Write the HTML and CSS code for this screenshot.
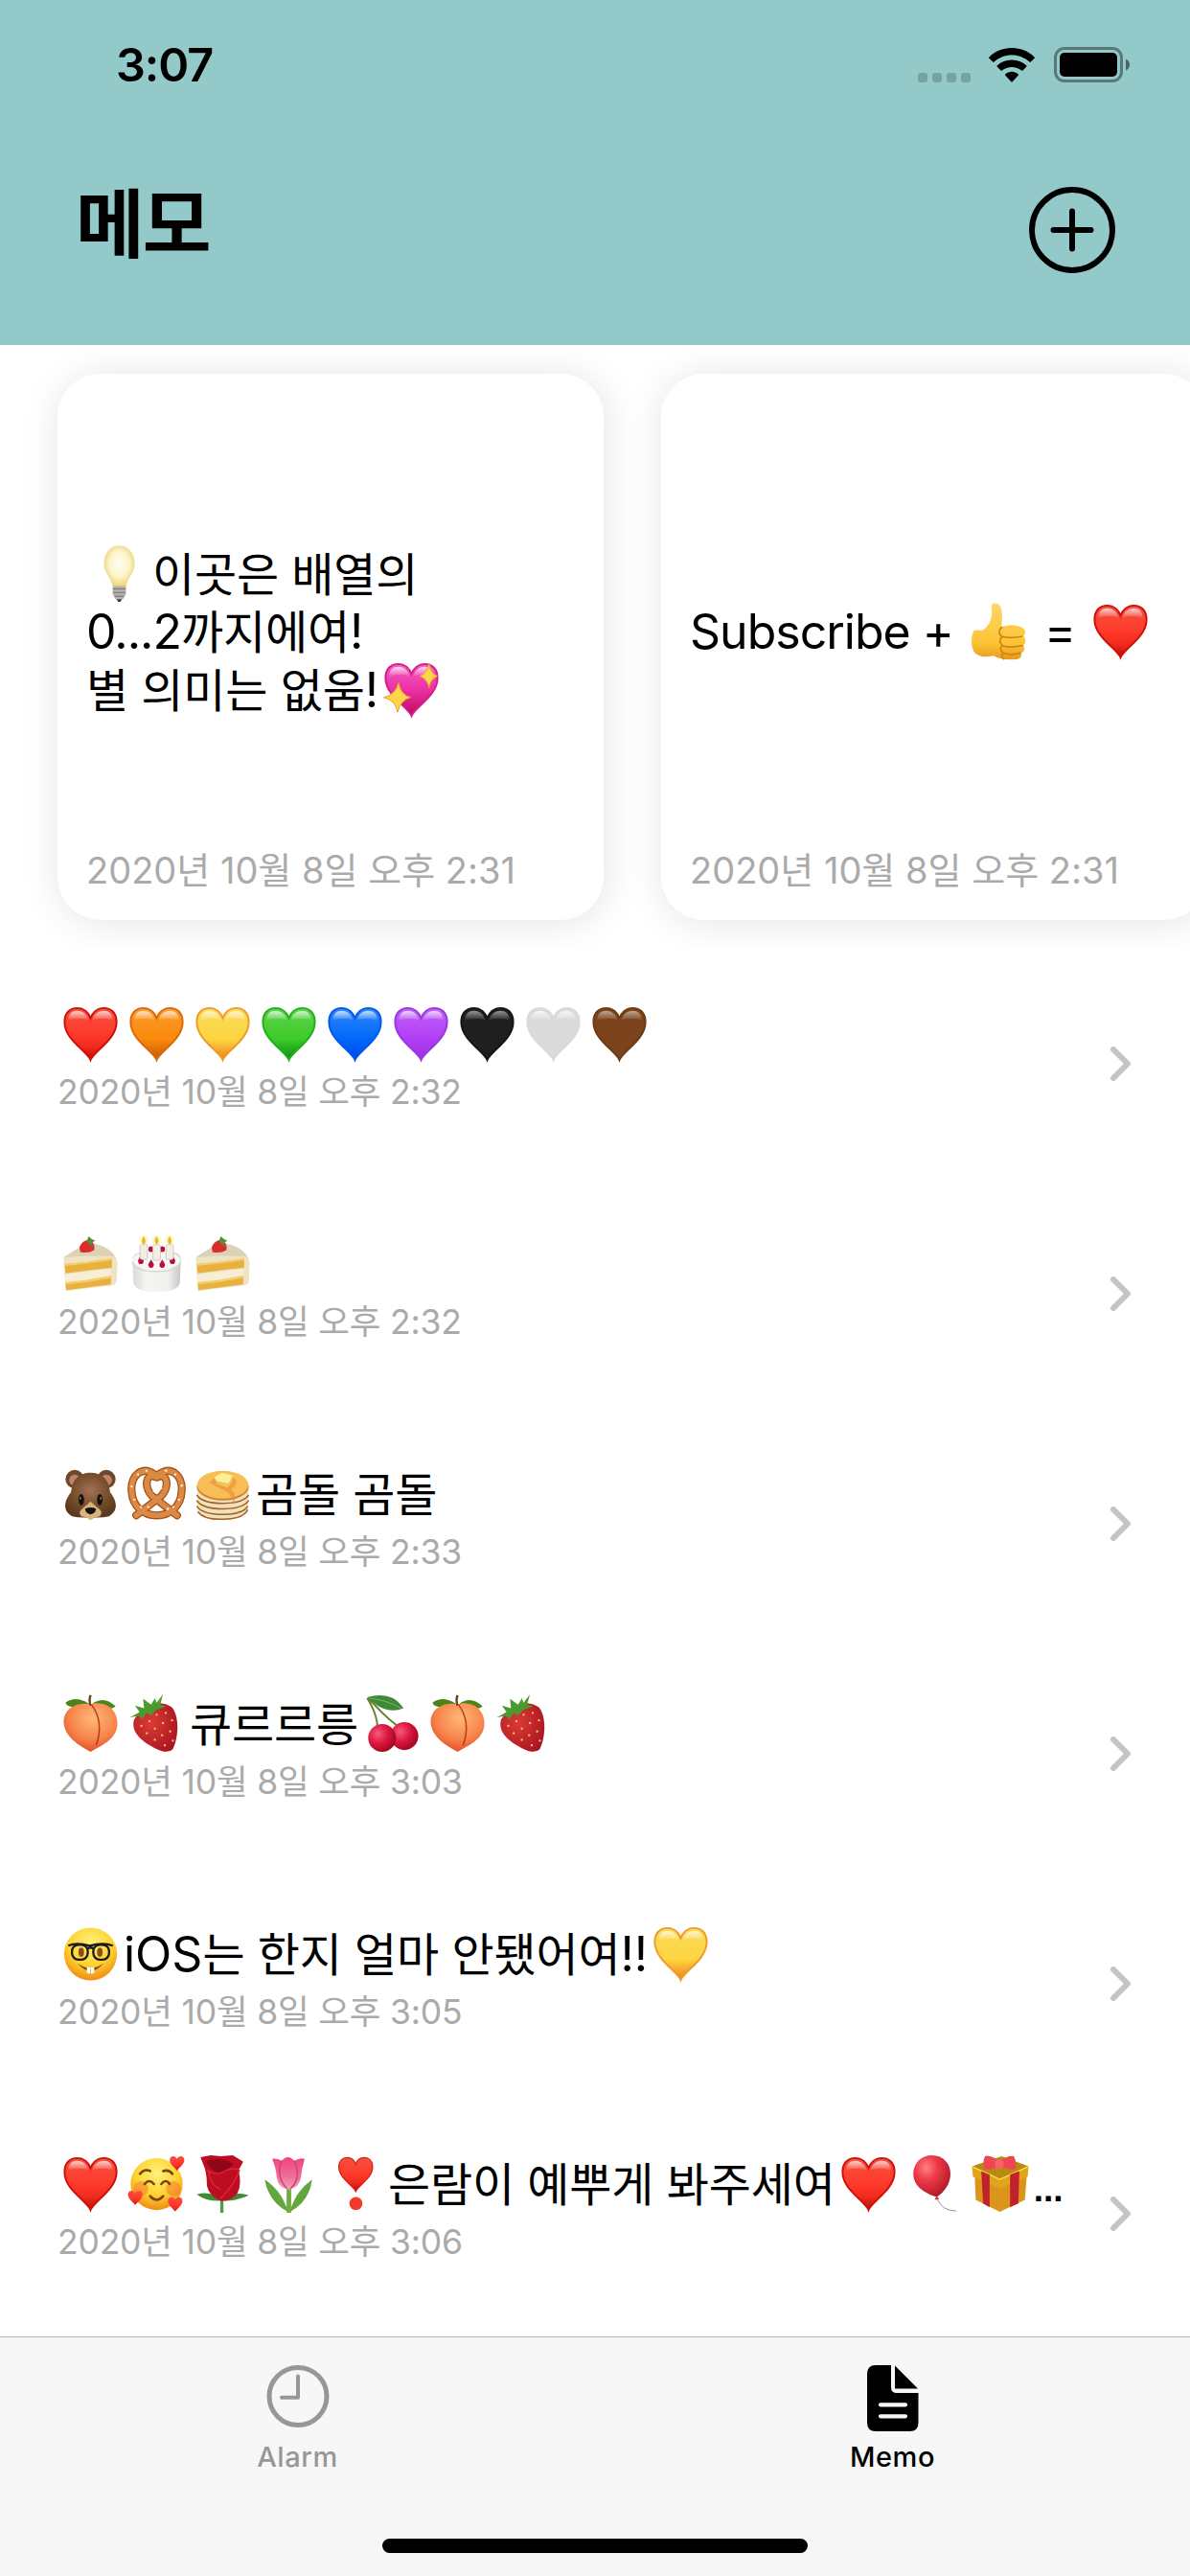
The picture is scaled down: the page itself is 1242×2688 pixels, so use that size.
FILE: index.html
```html
<!DOCTYPE html>
<html lang="ko">
<head>
<meta charset="utf-8">
<title>메모</title>
<link rel="stylesheet" href="styles.css">
</head>
<body>
<svg width="0" height="0" class="defs" aria-hidden="true">
  <defs>
    <linearGradient id="shine" x1="0" y1="0" x2="0" y2="1"><stop offset="0" stop-color="#fff" stop-opacity=".75"/><stop offset="1" stop-color="#fff" stop-opacity="0"/></linearGradient>
    <linearGradient id="g-red" x1="0" y1="0" x2="0" y2="1"><stop offset="0" stop-color="#f5503f"/><stop offset=".5" stop-color="#ff3a2b"/><stop offset=".75" stop-color="#f02a1c"/><stop offset="1" stop-color="#b30d05"/></linearGradient>
    <linearGradient id="g-orange" x1="0" y1="0" x2="0" y2="1"><stop offset="0" stop-color="#fb9a2b"/><stop offset=".6" stop-color="#fb8a0c"/><stop offset="1" stop-color="#c65405"/></linearGradient>
    <linearGradient id="g-yellow" x1="0" y1="0" x2="0" y2="1"><stop offset="0" stop-color="#fbd95a"/><stop offset=".6" stop-color="#fcd640"/><stop offset="1" stop-color="#ef7d1e"/></linearGradient>
    <linearGradient id="g-green" x1="0" y1="0" x2="0" y2="1"><stop offset="0" stop-color="#5fd24d"/><stop offset=".6" stop-color="#3ecb29"/><stop offset="1" stop-color="#0b8a13"/></linearGradient>
    <linearGradient id="g-blue" x1="0" y1="0" x2="0" y2="1"><stop offset="0" stop-color="#2f87fb"/><stop offset=".6" stop-color="#0068f8"/><stop offset="1" stop-color="#0045ea"/></linearGradient>
    <linearGradient id="g-purple" x1="0" y1="0" x2="0" y2="1"><stop offset="0" stop-color="#bf60f8"/><stop offset=".6" stop-color="#b23df6"/><stop offset="1" stop-color="#9a2fe0"/></linearGradient>
    <linearGradient id="g-pink" x1="0" y1="0" x2="0" y2="1"><stop offset="0" stop-color="#f25fc0"/><stop offset=".5" stop-color="#ec2fa5"/><stop offset="1" stop-color="#b80d5c"/></linearGradient>
    <radialGradient id="g-face" cx=".5" cy=".3" r=".7"><stop offset="0" stop-color="#fff27a"/><stop offset=".6" stop-color="#fdd22f"/><stop offset="1" stop-color="#f08a12"/></radialGradient>
    <radialGradient id="g-bulb" cx=".5" cy=".45" r=".55"><stop offset="0" stop-color="#fffef8"/><stop offset=".6" stop-color="#fdf4c8"/><stop offset="1" stop-color="#eed678"/></radialGradient>
    <radialGradient id="g-berry" cx=".4" cy=".4" r=".7"><stop offset="0" stop-color="#dc3b35"/><stop offset="1" stop-color="#a81420"/></radialGradient>
    <radialGradient id="g-cherry" cx=".35" cy=".35" r=".7"><stop offset="0" stop-color="#f45a7c"/><stop offset=".5" stop-color="#de1840"/><stop offset="1" stop-color="#9f0522"/></radialGradient>
    <radialGradient id="g-peach" cx=".55" cy=".3" r=".75"><stop offset="0" stop-color="#ffb877"/><stop offset=".6" stop-color="#f7834a"/><stop offset="1" stop-color="#de4526"/></radialGradient>
    <radialGradient id="g-balloon" cx=".35" cy=".3" r=".75"><stop offset="0" stop-color="#fb8484"/><stop offset=".4" stop-color="#ef3a48"/><stop offset="1" stop-color="#ae1728"/></radialGradient>
    <radialGradient id="g-bear" cx=".5" cy=".4" r=".6"><stop offset="0" stop-color="#a2705a"/><stop offset=".5" stop-color="#7d532f"/><stop offset="1" stop-color="#5a3a1c"/></radialGradient>
    <linearGradient id="g-white" x1="0" y1="0" x2="1" y2="0"><stop offset="0" stop-color="#d8d8d6"/><stop offset=".3" stop-color="#f6f6f5"/><stop offset=".75" stop-color="#f0f0ef"/><stop offset="1" stop-color="#c4c4c3"/></linearGradient>
    <linearGradient id="g-thumb" x1="0" y1="0" x2="0" y2="1"><stop offset="0" stop-color="#ffd765"/><stop offset=".7" stop-color="#fcc436"/><stop offset="1" stop-color="#e89a1c"/></linearGradient>
    <linearGradient id="g-tulip" x1="0" y1="0" x2="0" y2="1"><stop offset="0" stop-color="#f0427c"/><stop offset=".6" stop-color="#ee6f9c"/><stop offset="1" stop-color="#f3a3b4"/></linearGradient>
    <path id="heart-shape" d="M32 60C28 50 4 38 4 19C4 9 10 4 17.500 4C25 4 30 9 32 15C34 9 39 4 46.500 4C54 4 60 9 60 19C60 38 36 50 32 60Z"/>
    <path id="heart-shine" d="M8 18C8 10 12 7 18 7C24 7 28 11 30 17C22 15 13 15 8 18ZM56 18C56 10 52 7 46 7C40 7 36 11 34 17C42 15 51 15 56 18Z" fill="url(#shine)"/>

    <symbol id="red" viewBox="0 0 64 64"><use href="#heart-shape" fill="url(#g-red)" stroke="#cf1009" stroke-width="2"/><use href="#heart-shine"/></symbol>
    <symbol id="orange" viewBox="0 0 64 64"><use href="#heart-shape" fill="url(#g-orange)" stroke="#d96a0a" stroke-width="2"/><use href="#heart-shine"/></symbol>
    <symbol id="yellow" viewBox="0 0 64 64"><use href="#heart-shape" fill="url(#g-yellow)" stroke="#f29a26" stroke-width="2"/><use href="#heart-shine"/></symbol>
    <symbol id="green" viewBox="0 0 64 64"><use href="#heart-shape" fill="url(#g-green)" stroke="#1fb01c" stroke-width="2"/><use href="#heart-shine"/></symbol>
    <symbol id="blue" viewBox="0 0 64 64"><use href="#heart-shape" fill="url(#g-blue)" stroke="#0456ee" stroke-width="2"/><use href="#heart-shine"/></symbol>
    <symbol id="purple" viewBox="0 0 64 64"><use href="#heart-shape" fill="url(#g-purple)" stroke="#9a35e2" stroke-width="2"/><use href="#heart-shine"/></symbol>
    <symbol id="black" viewBox="0 0 64 64"><use href="#heart-shape" fill="#1f1f1f" stroke="#151515" stroke-width="2"/><use href="#heart-shine" opacity=".7"/></symbol>
    <symbol id="white" viewBox="0 0 64 64"><use href="#heart-shape" fill="#dadada" stroke="#dcd9da" stroke-width="2"/><use href="#heart-shine"/></symbol>
    <symbol id="brown" viewBox="0 0 64 64"><use href="#heart-shape" fill="#7b421b" stroke="#6d3a14" stroke-width="2"/><use href="#heart-shine" opacity=".7"/></symbol>

    <symbol id="sparkle" viewBox="0 0 64 64"><use href="#heart-shape" fill="url(#g-pink)" stroke="#d41c8c" stroke-width="2"/><use href="#heart-shine"/>
      <path d="M51 3Q52 14 60 17Q52 20 51 30Q49 20 41 17Q49 14 51 3ZM18 24Q20 37 31 40Q20 43 17 56Q15 43 2 40Q15 37 18 24Z" fill="#fdd548" stroke="#ec9a2a" stroke-width="1"/></symbol>

    <symbol id="bulb" viewBox="0 0 64 64"><path d="M32 2C22 2 16 10 16 21C16 32 24 35 25 45H39C40 35 48 32 48 21C48 10 42 2 32 2Z" fill="url(#g-bulb)" stroke="#ecd98a" stroke-width="1"/>
      <path d="M25 45H39V54L36 59H28L25 54Z" fill="#b5b2ac"/><path d="M25 48H39M25 52H39M27 56H37" stroke="#85827c" stroke-width="1.300"/><path d="M29 59H35L33 62H31Z" fill="#333"/></symbol>

    <symbol id="thumb" viewBox="0 0 64 64"><path d="M5 31Q10 30 14 31C21 27 26 18 24 6C23 1 30 0 33 4C37 11 35 20 35 27Q46 23 56 27C62 30 61 35 58 37C62 40 61 45 58 47C61 50 59 54 56 55C57 60 54 62 50 62Q35 63 26 58Q15 61 7 56C1 49 2 38 5 31Z" fill="url(#g-thumb)"/>
      <path d="M58 37C51 39 40 39 35 37C31 35 32 29 36 27M58 47C50 49 40 49 36 47C32 44 33 39 36 38M56 55C49 57 41 57 37 55C33 53 33 49 36 47M37 55C34 57 35 60 38 62" fill="none" stroke="#c98111" stroke-width="1.500"/></symbol>

    <symbol id="slice" viewBox="0 0 64 64"><path d="M3 25C15 16 26 11 35 10C50 13 60 20 61 31L60 51Q59 54 56 55L5 61Z" fill="#efe3c3"/><path d="M3 25C15 16 26 11 35 10C46 12 55 17 58 24Q30 22 3 25Z" fill="#ddd2b8"/>
      <path d="M4 32Q30 30 55 26V36Q30 38 5 42ZM5 52Q30 50 54 45V54L6 60Z" fill="#e7b13f"/><path d="M4 33Q30 31 55 27M5 53Q30 51 54 46" stroke="#f7ce62" stroke-width="2" fill="none"/>
      <path d="M4 43Q30 41 54 37V44Q30 49 5 51Z" fill="#f8eed6"/><path d="M20 14Q23 6 31 6Q37 9 36 17Q29 21 21 19Z" fill="#dc2b2b"/><path d="M28 7L30 2L33 5L37 7L33 9L36 14L31 11Z" fill="#4c9336"/></symbol>

    <symbol id="cake" viewBox="0 0 64 64"><path d="M6 27Q6 17 32 17Q58 17 58 27L57 52Q55 62 32 62Q9 62 7 52Z" fill="url(#g-white)"/><ellipse cx="32" cy="28" rx="26" ry="10" fill="#f7f7f6"/><path d="M6 29Q8 40 32 40Q56 40 58 29" fill="none" stroke="#d7d7d5" stroke-width="1.500"/>
      <g fill="#b80f3e"><circle cx="26" cy="16" r="3"/><circle cx="38" cy="16" r="3"/><path d="M15 22l3 6q0 4-3 4t-3-4zM26 27l3 5q0 4-3 4t-3-4zM38 27l3 5q0 4-3 4t-3-4zM49 22l3 6q0 4-3 4t-3-4z"/></g>
      <g fill="#f3efe4" stroke="#c6c0b2" stroke-width=".8"><rect x="14" y="11" width="8" height="16" rx="2"/><rect x="28" y="11" width="8" height="17" rx="2"/><rect x="42" y="11" width="8" height="16" rx="2"/></g>
      <g fill="#fff6a8" opacity=".7"><circle cx="18" cy="6" r="5"/><circle cx="32" cy="6" r="5"/><circle cx="46" cy="6" r="5"/></g><path d="M18 2Q22 8 18 11Q14 8 18 2M32 2Q36 8 32 11Q28 8 32 2M46 2Q50 8 46 11Q42 8 46 2" fill="#e8b62a"/></symbol>

    <symbol id="bear" viewBox="0 0 64 64"><g fill="#704826"><circle cx="15" cy="16" r="10"/><circle cx="49" cy="16" r="10"/></g><g fill="#bd846c"><circle cx="15" cy="17" r="6"/><circle cx="49" cy="17" r="6"/></g>
      <path d="M32 9C45 9 52 17 53 30C61 40 62 50 52 56Q43 58 32 57Q21 58 12 56C2 50 3 40 11 30C12 17 19 9 32 9Z" fill="url(#g-bear)"/><path d="M32 40Q35 43 40 47Q46 51 42 56Q38 57 36 57Q32 63 28 57Q26 57 22 56Q18 51 24 47Q29 43 32 40Z" fill="#d9b27c"/><path d="M26 48Q32 45 38 48Q37 53 32 54Q27 53 26 48Z" fill="#14100d"/><g fill="#15110e"><ellipse cx="22" cy="38" rx="3" ry="6"/><ellipse cx="42" cy="38" rx="3" ry="6"/></g><path d="M21 35v3M43 35v3" stroke="#8a8480" stroke-width="1.400"/></symbol>

    <symbol id="pretzel" viewBox="0 0 64 64"><g fill="none" stroke="#a45218" stroke-width="8.500" stroke-linecap="round"><path d="M10 55L37 34C46 24 44 8 32 14M54 55L27 34C18 24 20 8 32 14M30 11C16 1 4 12 5 29C6 46 18 55 32 55C46 55 58 46 59 29C60 12 48 1 34 11"/></g>
      <g fill="none" stroke="#da8a45" stroke-width="5.800" stroke-linecap="round"><path d="M10 55L37 34C46 24 44 8 32 14M54 55L27 34C18 24 20 8 32 14M30 11C16 1 4 12 5 29C6 46 18 55 32 55C46 55 58 46 59 29C60 12 48 1 34 11"/></g>
      <path d="M5 24h.1M8 38h.1M12 11h.1M21 7h.1M42 7h.1M52 11h.1M59 23h.1M56 38h.1M50 46h.1M15 46h.1M29 29h.1M37 26h.1M44 48h.1M23 46h.1" stroke="#fff1dc" stroke-width="2.400" stroke-linecap="round"/></symbol>

    <symbol id="pancakes" viewBox="0 0 64 64"><path d="M4 26L5 51Q12 60 33 60Q54 60 59 49L60 26Z" fill="#f3dfb8"/><path d="M4 33Q10 42 32 42Q54 42 60 33M4 39Q10 48 32 48Q54 48 60 39M4 45Q10 54 32 54Q54 54 59 45M5 51Q12 60 33 59Q54 59 59 49" fill="none" stroke="#9b642c" stroke-width="1.600"/>
      <ellipse cx="32" cy="24" rx="28" ry="15" fill="#c98636"/><ellipse cx="32" cy="22" rx="27.500" ry="15" fill="#f8bd55"/><path d="M18 20Q22 11 40 13Q53 18 41 27Q47 30 44 43Q41 34 37 30Q28 25 18 20Z" fill="#e98f3e" opacity=".65"/><path d="M23 14L31 9L43 12L38 21L25 18Z" fill="#ffed98"/><path d="M25 18L38 21L43 13L42 19L37 25L25 21Z" fill="#f0c655"/></symbol>

    <symbol id="peach" viewBox="0 0 64 64"><path d="M34 10Q47 1 59 13Q54 19 36 11ZM30 10Q16 1 5 9Q8 17 28 11Z" fill="#4e8318"/><path d="M32 11C40 7 60 10 61 31C61 49 42 56 32 62C21 56 3 46 3 29C4 12 22 8 32 11Z" fill="url(#g-peach)"/><path d="M33 11Q47 30 38 55" fill="none" stroke="#bf3b1b" stroke-width="1.600"/><path d="M32 12Q30 7 32 1" fill="none" stroke="#6a4221" stroke-width="2.500"/></symbol>

    <symbol id="strawberry" viewBox="0 0 64 64"><g transform="translate(-1 0) scale(.97 1)"><path d="M9 27C20 10 38 5 51 14C60 25 58 47 52 59Q46 65 32 58C16 50 5 40 9 27Z" fill="url(#g-berry)"/><path d="M4 25L15 19L10 12L20 15L19 5L28 11L32 4L34 9L41 0L38 11L45 13L33 17L28 23L23 20L18 27L14 23Z" fill="#4c9a2f"/>
      <path d="M17 34h.1M26 29h.1M34 22h.1M44 20h.1M23 42h.1M32 37h.1M41 31h.1M51 28h.1M32 49h.1M40 44h.1M49 40h.1M43 55h.1M52 50h.1" stroke="#f2c861" stroke-width="2.400" stroke-linecap="round"/></g></symbol>

    <symbol id="cherries" viewBox="0 0 64 64"><path d="M6 4Q17 22 17 36M7 4Q28 27 40 35" fill="none" stroke="#66832a" stroke-width="2"/><path d="M6 3Q33 -4 45 15Q25 23 6 3Z" fill="#3f8a38"/><path d="M8 4Q26 6 43 15" fill="none" stroke="#78b65c" stroke-width="1"/><circle cx="46" cy="45" r="15" fill="url(#g-cherry)"/><circle cx="22" cy="47" r="15" fill="url(#g-cherry)"/></symbol>

    <symbol id="nerd" viewBox="0 0 64 64"><circle cx="32" cy="32" r="28.500" fill="url(#g-face)"/><g fill="#8a4e13"><ellipse cx="22" cy="30" rx="3" ry="5"/><ellipse cx="42" cy="30" rx="3" ry="5"/></g><g fill="none" stroke="#1c1c1f" stroke-width="2.400"><rect x="12" y="22" width="17" height="16" rx="7"/><rect x="35" y="22" width="17" height="16" rx="7"/><path d="M8 23Q17 19 31 23Q46 19 56 23M29 26Q32 24 35 26"/></g><path d="M18 42Q32 52 46 42Q32 58 18 42Z" fill="#854110"/><path d="M28 46.500H36V52Q32 54 28 52Z" fill="#fff"/><path d="M32 47V53" stroke="#bbb" stroke-width="1"/></symbol>

    <symbol id="adore" viewBox="0 0 64 64"><circle cx="32" cy="32" r="28" fill="url(#g-face)"/><g fill="#f56a35" opacity=".45"><circle cx="15" cy="37" r="8"/><circle cx="50" cy="37" r="8"/></g><g fill="none" stroke="#7c430e" stroke-width="2.600" stroke-linecap="round"><path d="M19 32Q24 26 29 32M37 32Q42 26 46 32M14 21Q19 15 25 18M39 18Q45 16 49 21M25 45Q32 53 39 45"/></g>
      <use href="#heart-shape" fill="url(#g-red)" transform="translate(45 1) scale(.28)"/><use href="#heart-shape" fill="url(#g-red)" transform="translate(0 38) scale(.28)"/><use href="#heart-shape" fill="url(#g-red)" transform="translate(43 45) scale(.28)"/></symbol>

    <symbol id="rose" viewBox="0 0 64 64"><path d="M31 45V63" stroke="#4f9b3d" stroke-width="3.500"/><path d="M31 50Q14 51 4 43Q21 39 31 50Q43 39 60 44Q46 51 31 50Z" fill="#3f8a35"/><path d="M8 3L19 1L30 2L43 1L54 8L49 17Q53 34 47 43Q39 51 30 50Q18 46 15 34Q15 24 13 16Z" fill="#be0c20"/><path d="M14 8Q28 1 43 10Q38 20 27 20Q18 16 14 8Z" fill="#8e0617"/><path d="M15 17Q25 24 34 18Q43 13 50 17Q44 34 29 48M17 18Q18 33 30 38" fill="none" stroke="#d92c38" stroke-width="1.300"/></symbol>

    <symbol id="tulip" viewBox="0 0 64 64"><path d="M32 35V63" stroke="#6fae3f" stroke-width="5"/><path d="M31 62Q25 40 6 27Q10 51 31 62ZM33 62Q39 40 57 27Q54 51 33 62Z" fill="#62a63d"/><path d="M14 5Q19 4 24 7Q31 -1 38 7Q44 3 49 5Q46 14 45 25Q43 36 32 38Q20 36 19 25Q18 14 14 5Z" fill="url(#g-tulip)"/><path d="M24 7Q18 25 30 37M38 7Q46 25 34 37" fill="none" stroke="#d43c76" stroke-width="1.500"/></symbol>

    <symbol id="exclaim" viewBox="0 0 64 64"><use href="#heart-shape" fill="url(#g-red)" stroke="#d81d12" stroke-width="2" transform="translate(12 1) scale(.65)"/><circle cx="33" cy="53" r="7" fill="#f03a2a"/></symbol>

    <symbol id="balloon" viewBox="0 0 64 64"><g transform="translate(-3 0)"><path d="M37 47Q43 61 58 61" fill="none" stroke="#8d8d8d" stroke-width="1"/><path d="M32 1C44 1 52 10 52 21C52 33 44 42 37 46Q12 38 12 21C12 9 21 1 32 1Z" fill="url(#g-balloon)"/><path d="M35 49L37 45L40 48Z" fill="#d52a38"/></g></symbol>

    <symbol id="gift" viewBox="0 0 64 64"><path d="M4 23L31 32V62L5 49ZM31 32L60 23L58 49L31 62Z" fill="#d9961a"/><path d="M1 13L33 2L62 13L31 27Z" fill="#b88a13"/><path d="M1 13L31 27V37L2 24ZM31 27L62 13L61 24L31 37Z" fill="#e0a41d"/><path d="M1 13L31 27L62 13" fill="none" stroke="#f9d83d" stroke-width="1.600"/><path d="M11 18L20 22V57L13 53ZM42 22L52 18L51 53L42 57Z" fill="#c1212c"/><path d="M31 8Q21 0 15 2Q12 8 14 16Q22 18 31 12Q42 18 48 16Q49 7 46 2Q39 1 31 8Z" fill="#ef4656"/><rect x="26" y="6" width="9" height="9" rx="3" fill="#f7616b"/></symbol>
  </defs>
</svg>

<div class="screen">
  <header class="header">
    <div class="status">
      <span class="clock">3:07</span>
      <div class="indicators">
        <span class="cell"><i></i><i></i><i></i><i></i></span>
        <svg class="wifi" width="48" height="36" viewBox="0 0 48 36"><path d="M24 0C33.500 0 41.500 3.500 47.500 9.500Q48.300 10.300 47.500 11.100L43.800 14.600Q43.200 15.200 42.500 14.500C37.500 10 31 7.400 24 7.400S10.500 10 5.500 14.500Q4.800 15.200 4.200 14.600L.5 11.100Q-.3 10.300.5 9.500C6.500 3.500 14.500 0 24 0ZM24 12.500C30 12.500 35.200 14.600 39.200 18.300Q39.900 19 39.200 19.700L35.500 23.500Q34.800 24.200 34.100 23.500C31.300 21.200 27.800 19.900 24 19.900S16.700 21.200 13.900 23.500Q13.200 24.200 12.500 23.500L8.800 19.700Q8.100 19 8.800 18.300C12.800 14.600 18 12.500 24 12.500ZM24 24.800C26.500 24.800 28.800 25.700 30.700 27.200Q31.300 27.900 30.700 28.700L24.700 35.200Q24 36 23.300 35.200L17.300 28.700Q16.700 27.900 17.300 27.200C19.200 25.700 21.500 24.800 24 24.800Z"/></svg>
        <svg class="battery" width="80" height="38" viewBox="0 0 80 38"><rect x="1.500" y="1.500" width="69" height="34" rx="9.500" fill="none" stroke="#000" stroke-opacity=".4" stroke-width="3"/><rect x="6" y="6" width="60" height="25" rx="5"/><path d="M75 12.500Q79 14.500 79 18.500T75 24.500Z" opacity=".5"/></svg>
      </div>
    </div>
    <div class="titlebar">
      <h1>메모</h1>
      <svg class="add" width="90" height="90" viewBox="0 0 90 90" fill="none" stroke="#000" stroke-width="6" stroke-linecap="round"><circle cx="45" cy="45" r="42"/><path d="M25.500 45H64.500M45 25.500V64.500"/></svg>
    </div>
  </header>

  <section class="cards">
    <article class="card">
      <p class="memo"><svg class="emoji"><use href="#bulb"/></svg>이곳은 배열의<br><span class="latin tight">0...2</span>까지에여<span class="latin">!</span><br>별 의미는 없움<span class="latin">!</span><svg class="emoji"><use href="#sparkle"/></svg></p>
      <time>2020년 10월 8일 오후 2:31</time>
    </article>
    <article class="card">
      <p class="memo"><span class="latin sub">Subscribe + </span><svg class="emoji"><use href="#thumb"/></svg><span class="latin sub"> = </span><svg class="emoji"><use href="#red"/></svg></p>
      <time>2020년 10월 8일 오후 2:31</time>
    </article>
  </section>

  <ul class="list">
    <li class="row"><div class="body"><p class="memo"><svg class="emoji"><use href="#red"/></svg><svg class="emoji"><use href="#orange"/></svg><svg class="emoji"><use href="#yellow"/></svg><svg class="emoji"><use href="#green"/></svg><svg class="emoji"><use href="#blue"/></svg><svg class="emoji"><use href="#purple"/></svg><svg class="emoji"><use href="#black"/></svg><svg class="emoji"><use href="#white"/></svg><svg class="emoji"><use href="#brown"/></svg></p><time>2020년 10월 8일 오후 2:32</time></div><svg class="chevron" viewBox="0 0 21 36"><path d="M3 3L18 18L3 33"/></svg></li>
    <li class="row"><div class="body"><p class="memo"><svg class="emoji"><use href="#slice"/></svg><svg class="emoji"><use href="#cake"/></svg><svg class="emoji"><use href="#slice"/></svg></p><time>2020년 10월 8일 오후 2:32</time></div><svg class="chevron" viewBox="0 0 21 36"><path d="M3 3L18 18L3 33"/></svg></li>
    <li class="row"><div class="body"><p class="memo"><svg class="emoji"><use href="#bear"/></svg><svg class="emoji"><use href="#pretzel"/></svg><svg class="emoji"><use href="#pancakes"/></svg>곰돌 곰돌</p><time>2020년 10월 8일 오후 2:33</time></div><svg class="chevron" viewBox="0 0 21 36"><path d="M3 3L18 18L3 33"/></svg></li>
    <li class="row"><div class="body"><p class="memo"><svg class="emoji"><use href="#peach"/></svg><svg class="emoji"><use href="#strawberry"/></svg>큐르르릉<svg class="emoji"><use href="#cherries"/></svg><svg class="emoji"><use href="#peach"/></svg><svg class="emoji"><use href="#strawberry"/></svg></p><time>2020년 10월 8일 오후 3:03</time></div><svg class="chevron" viewBox="0 0 21 36"><path d="M3 3L18 18L3 33"/></svg></li>
    <li class="row"><div class="body"><p class="memo"><svg class="emoji"><use href="#nerd"/></svg><span class="latin">iOS</span>는 한지 얼마 안됐어여<span class="latin">!!</span><svg class="emoji"><use href="#yellow"/></svg></p><time>2020년 10월 8일 오후 3:05</time></div><svg class="chevron" viewBox="0 0 21 36"><path d="M3 3L18 18L3 33"/></svg></li>
    <li class="row"><div class="body"><p class="memo"><svg class="emoji"><use href="#red"/></svg><svg class="emoji"><use href="#adore"/></svg><svg class="emoji"><use href="#rose"/></svg><svg class="emoji"><use href="#tulip"/></svg><svg class="emoji"><use href="#exclaim"/></svg>은람이 예뿌게 봐주세여<svg class="emoji"><use href="#red"/></svg><svg class="emoji"><use href="#balloon"/></svg><svg class="emoji"><use href="#gift"/></svg><b class="more">...</b></p><time>2020년 10월 8일 오후 3:06</time></div><svg class="chevron" viewBox="0 0 21 36"><path d="M3 3L18 18L3 33"/></svg></li>
  </ul>

  <nav class="tabbar">
    <div class="tabs">
      <a class="tab"><svg width="70" height="70" viewBox="0 0 70 70" fill="none" stroke="#979797" stroke-linecap="round" stroke-linejoin="round"><circle cx="35" cy="32.500" r="30" stroke-width="5"/><path d="M35 11.500V33.700H18" stroke-width="4"/></svg><span>Alarm</span></a>
      <a class="tab active"><svg width="54" height="70" viewBox="0 0 54 70"><path d="M9 0H25V23Q25 29 31 29H53.500V60Q53.500 69 44.500 69H9Q0 69 0 60V9Q0 0 9 0Z"/><path d="M29 .5L53 24.500H29Z"/><path d="M14 41.300H40M14 53.300H40" stroke="#f7f7f7" stroke-width="4.200" stroke-linecap="round"/></svg><span>Memo</span></a>
    </div>
    <div class="home"></div>
  </nav>
</div>
</body>
</html>
```

FILE: styles.css
```css
* { box-sizing: border-box; }
body {
  margin: 0;
  background: #fff;
  color: #000;
  font-family: Inter, "Noto Sans CJK KR", sans-serif;
}
.defs { position: absolute; }
.screen {
  width: 1242px;
  height: 2688px;
  display: flex;
  flex-direction: column;
  overflow: hidden;
}

/* header */
.header { height: 360px; flex: none; background: #93cac9; }
.status {
  height: 135px;
  padding: 1px 62px 0 121px;
  display: flex;
  align-items: center;
  justify-content: space-between;
}
.clock { font-size: 48.500px; font-weight: 600; line-height: 60px; letter-spacing: -1px; }
.indicators { display: flex; align-items: center; }
.cell { display: flex; gap: 5px; margin: 25px 19px 0 0; }
.cell i { width: 10px; height: 10px; border-radius: 3px; background: #76a2a1; }
.wifi { margin-right: 20px; }
.titlebar {
  height: 210px;
  padding: 0 78px 0 79px;
  display: flex;
  align-items: center;
  justify-content: space-between;
}
.titlebar h1 {
  margin: 0 0 22px;
  font: 700 78px/100px "Noto Sans CJK KR", sans-serif;
  letter-spacing: -2px;
}

/* cards */
.cards {
  flex: none;
  height: 630px;
  padding: 30px 60px;
  display: flex;
  gap: 60px;
  overflow: hidden;
}
.card {
  flex: none;
  width: 570px;
  height: 570px;
  padding: 0 30px 28px;
  display: flex;
  flex-direction: column;
  border-radius: 45px;
  background: #fff;
  box-shadow: 2px 2px 42px rgba(0, 0, 0, 0.11);
}
.card .memo { flex: 1; align-content: center; padding-top: 47px; }
.card time { font-size: 38px; line-height: 48px; letter-spacing: 0; }

.memo {
  margin: 0;
  font-family: Inter, "Noto Sans CJK KR", sans-serif;
  font-size: 48px;
  line-height: 60.500px;
  letter-spacing: -0.16px;
  white-space: nowrap;
}
.latin { font-size: 50px; letter-spacing: 0; line-height: 1px; }
.tight { letter-spacing: -1px; }
.sub { white-space: pre; letter-spacing: -1px; }
.more { font: 700 37px/1px "Liberation Sans", sans-serif; letter-spacing: 0; }
.emoji { width: 69px; height: 62px; vertical-align: -8px; margin: -5px 0; }
time { display: block; color: #aaa; }

/* list */
.list { list-style: none; margin: 0; padding: 0; flex: none; height: 1448px; }
.row {
  height: 240px;
  padding: 0 62px 0 60px;
  display: flex;
  align-items: center;
  justify-content: space-between;
}
.row .memo { margin-bottom: 7px; }
.row time { padding-bottom: 7px; font-size: 35.500px; line-height: 46px; letter-spacing: -0.2px; }
.chevron { width: 21px; height: 36px; fill: none; stroke: #c4c4c7; stroke-width: 6; stroke-linecap: round; stroke-linejoin: round; flex: none; }

/* tab bar */
.tabbar {
  flex: none;
  height: 250px;
  border-top: 1px solid #b2b2b2;
  background: #f7f7f7;
  display: flex;
  flex-direction: column;
  align-items: center;
}
.tabs { display: flex; width: 100%; height: 210px; padding-top: 29px; }
.tab {
  flex: 1;
  display: flex;
  flex-direction: column;
  align-items: center;
  gap: 8px;
  color: #979797;
  font-size: 29px;
  font-weight: 500;
  line-height: 36px;
  letter-spacing: 0.6px;
}
.tab.active { color: #000; }
.home { width: 444px; height: 15px; border-radius: 8px; background: #000; }
```
